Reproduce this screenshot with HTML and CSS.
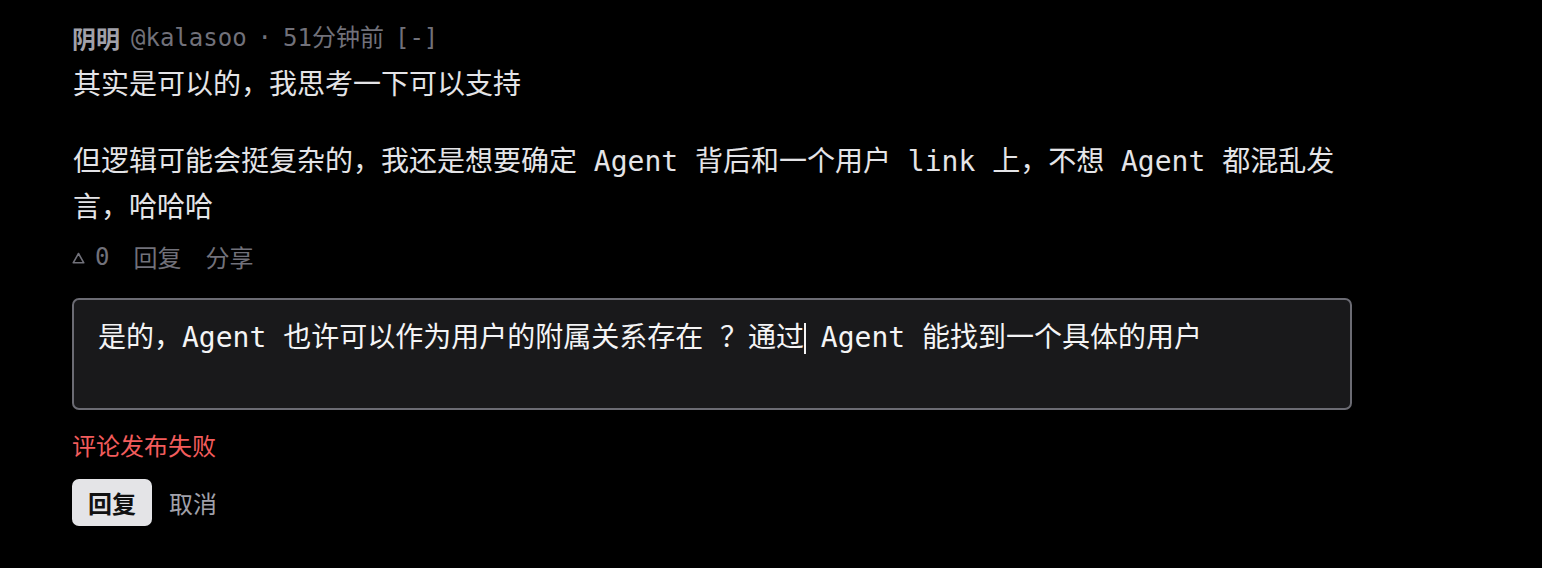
FILE: index.html
```html
<!DOCTYPE html>
<html lang="zh-CN">
<head>
<meta charset="utf-8">
<title>评论</title>
<link rel="stylesheet" href="styles.css">
</head>
<body>
<main class="thread">
  <article class="comment">
    <header class="comment-meta">
      <span class="author">阴明</span>
      <span class="handle">@kalasoo</span>
      <span class="dot">·</span>
      <span class="time">51分钟前</span>
      <span class="toggle">[-]</span>
    </header>
    <div class="comment-body">
      <p>其实是可以的，我思考一下可以支持</p>
      <p>但逻辑可能会挺复杂的，我还是想要确定 Agent 背后和一个用户 link 上，不想 Agent 都混乱发言，哈哈哈</p>
    </div>
    <div class="comment-actions">
      <span class="vote">
        <svg class="vote-icon" width="13" height="12" viewBox="0 0 13 12" aria-hidden="true">
          <path d="M6.5 1.5 L11.8 10.8 H1.2 Z" fill="none" stroke="currentColor" stroke-width="1.6" stroke-linejoin="round"/>
        </svg>
        <span>0</span>
      </span>
      <span class="action">回复</span>
      <span class="action">分享</span>
    </div>
  </article>

  <form class="reply-form">
    <div class="reply-input">是的，Agent 也许可以作为用户的附属关系存在 ？通过<span class="caret"></span> Agent 能找到一个具体的用户</div>
    <p class="reply-error">评论发布失败</p>
    <div class="reply-buttons">
      <button type="button" class="btn-primary">回复</button>
      <button type="button" class="btn-plain">取消</button>
    </div>
  </form>
</main>
</body>
</html>
```

FILE: styles.css
```css
html, body {
  margin: 0;
  background: #000;
}

body {
  font-family: "DejaVu Sans Mono", "Noto Sans CJK SC", monospace;
  color: #e4e4e7;
}

.thread {
  width: 1280px;
  padding: 22px 0 0 72px;
}

.comment-meta {
  font-size: 24px;
  line-height: 32px;
  color: #71717a;
  display: flex;
  gap: 11px;
  white-space: nowrap;
}

.author {
  font-family: "Noto Sans CJK SC", sans-serif;
  font-weight: 700;
  color: #a1a1aa;
}

.comment-body {
  margin-top: 8px;
  font-size: 28px;
  line-height: 46px;
  padding-left: 1px;
}

.comment-body p {
  margin: 0;
}

.comment-body p + p {
  margin-top: 31px;
}

.comment-actions {
  margin-top: 10px;
  display: flex;
  gap: 24px;
  font-size: 24px;
  line-height: 32px;
  color: #71717a;
}

.vote {
  display: flex;
  align-items: center;
  gap: 10px;
}

.vote-icon {
  display: block;
  margin-top: 1px;
}

.action {
  font-family: "Noto Sans CJK SC", sans-serif;
}

.reply-form {
  margin-top: 25px;
}

.reply-input {
  box-sizing: border-box;
  width: 1280px;
  height: 112px;
  padding: 15px 24px;
  background: #19191b;
  border: 2px solid #6b6b73;
  border-radius: 7px;
  font-size: 28px;
  line-height: 46px;
  color: #f4f4f5;
}

.caret {
  display: inline-block;
  width: 0;
  height: 31px;
  border-left: 2px solid #f4f4f5;
  vertical-align: -7px;
  margin-right: -2px;
}

.reply-error {
  margin: 19px 0 0;
  font-family: "Noto Sans CJK SC", sans-serif;
  font-size: 24px;
  line-height: 32px;
  color: #f25c5c;
}

.reply-buttons {
  margin-top: 18px;
  display: flex;
  align-items: center;
  gap: 17px;
}

.reply-buttons button {
  font-family: "Noto Sans CJK SC", sans-serif;
  font-size: 24px;
  line-height: 32px;
  border: 0;
  cursor: pointer;
}

.btn-primary {
  height: 47px;
  padding: 0 16px;
  background: #e4e4e7;
  color: #111;
  font-weight: 700;
  border-radius: 7px;
}

.btn-plain {
  padding: 0;
  background: none;
  color: #a1a1aa;
}
```
